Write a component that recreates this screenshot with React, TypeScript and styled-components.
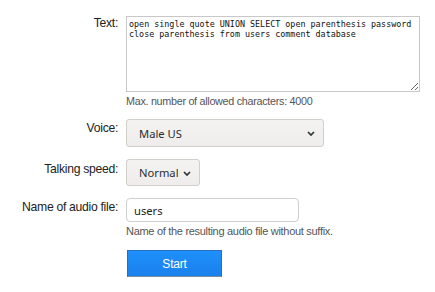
import React from "react";
import styled, { createGlobalStyle } from "styled-components";

const Global = createGlobalStyle`
  html, body { margin: 0; padding: 0; background: #fff; }
  body { font-family: "Liberation Sans", Arial, sans-serif; color: #222; }
`;

const Form = styled.form`
  display: grid;
  grid-template-columns: 118px 1fr;
  column-gap: 8px;
  padding-top: 16px;
  width: 435px;
  box-sizing: border-box;
`;

const Label = styled.label<{ $top: number }>`
  text-align: right;
  font-size: 12.2px;
  letter-spacing: -0.3px;
  line-height: 14px;
  color: #222;
  padding-top: ${(p) => p.$top}px;
  white-space: nowrap;
`;

const Field = styled.div<{ $mb: number }>`
  display: flex;
  flex-direction: column;
  align-items: flex-start;
  margin-bottom: ${(p) => p.$mb}px;
`;

const TextArea = styled.textarea`
  width: 294px;
  height: 76px;
  box-sizing: border-box;
  border: 1px solid #c8c8c8;
  padding: 2px 2px;
  font-family: "DejaVu Sans Mono", monospace;
  font-size: 8.4px;
  line-height: 10.3px;
  color: #111;
  resize: both;
  margin: 0;
`;

const Hint = styled.div<{ $size: number }>`
  font-size: ${(p) => p.$size}px;
  letter-spacing: -0.3px;
  line-height: 14px;
  color: #555;
  margin-top: 2px;
`;

const SelectWrap = styled.div<{ $w: number }>`
  position: relative;
  width: ${(p) => p.$w}px;
`;

const Select = styled.select<{ $h: number }>`
  appearance: none;
  width: 100%;
  height: ${(p) => p.$h}px;
  box-sizing: border-box;
  border: 1px solid #d2cec9;
  border-radius: 3px;
  background: linear-gradient(#f4f3f2, #eeedeb);
  font-family: "Noto Sans", sans-serif;
  font-size: 11.2px;
  color: #2a2e30;
  padding: 0 0 0 12px;
  margin: 0;
`;

const Chevron = styled.svg`
  position: absolute;
  right: 9px;
  top: 50%;
  margin-top: -2px;
  pointer-events: none;
`;

const Input = styled.input`
  width: 173px;
  height: 24px;
  box-sizing: border-box;
  border: 1px solid #cfcfcf;
  border-radius: 4px;
  padding: 0 7px;
  font-family: "Noto Sans", sans-serif;
  font-size: 11.2px;
  color: #222;
  margin: 0;
`;

const Button = styled.button`
  width: 95px;
  height: 27px;
  border: 1px solid #2a6fbf;
  border-bottom-color: #7a8ea6;
  background: linear-gradient(#1f90fb, #1a80ec);
  color: #fff;
  font-family: "Liberation Sans", Arial, sans-serif;
  font-size: 12px;
  letter-spacing: -0.2px;
  padding: 0;
  margin-left: 1px;
`;

const ChevronIcon = () => (
  <Chevron width="8" height="5" viewBox="0 0 8 5">
    <path d="M1 1 L4 4 L7 1" stroke="#2e3436" strokeWidth="1.7" fill="none" />
  </Chevron>
);

export default function App() {
  return (
    <>
      <Global />
      <Form onSubmit={(e) => e.preventDefault()}>
        <Label $top={0}>Text:</Label>
        <Field $mb={11}>
          <TextArea
            defaultValue={"open single quote UNION SELECT open parenthesis password close parenthesis from users comment database"}
          />
          <Hint $size={10.8}>Max. number of allowed characters: 4000</Hint>
        </Field>

        <Label $top={2}>Voice:</Label>
        <Field $mb={12}>
          <SelectWrap $w={198}>
            <Select $h={28} defaultValue="male-us">
              <option value="male-us">Male US</option>
            </Select>
            <ChevronIcon />
          </SelectWrap>
        </Field>

        <Label $top={3}>Talking speed:</Label>
        <Field $mb={12}>
          <SelectWrap $w={74}>
            <Select $h={27} defaultValue="normal">
              <option value="normal">Normal</option>
            </Select>
            <ChevronIcon />
          </SelectWrap>
        </Field>

        <Label $top={2}>Name of audio file:</Label>
        <Field $mb={12}>
          <Input defaultValue="users" />
          <Hint $size={11}>Name of the resulting audio file without suffix.</Hint>
        </Field>

        <div />
        <Field $mb={0}>
          <Button type="submit">Start</Button>
        </Field>
      </Form>
    </>
  );
}
